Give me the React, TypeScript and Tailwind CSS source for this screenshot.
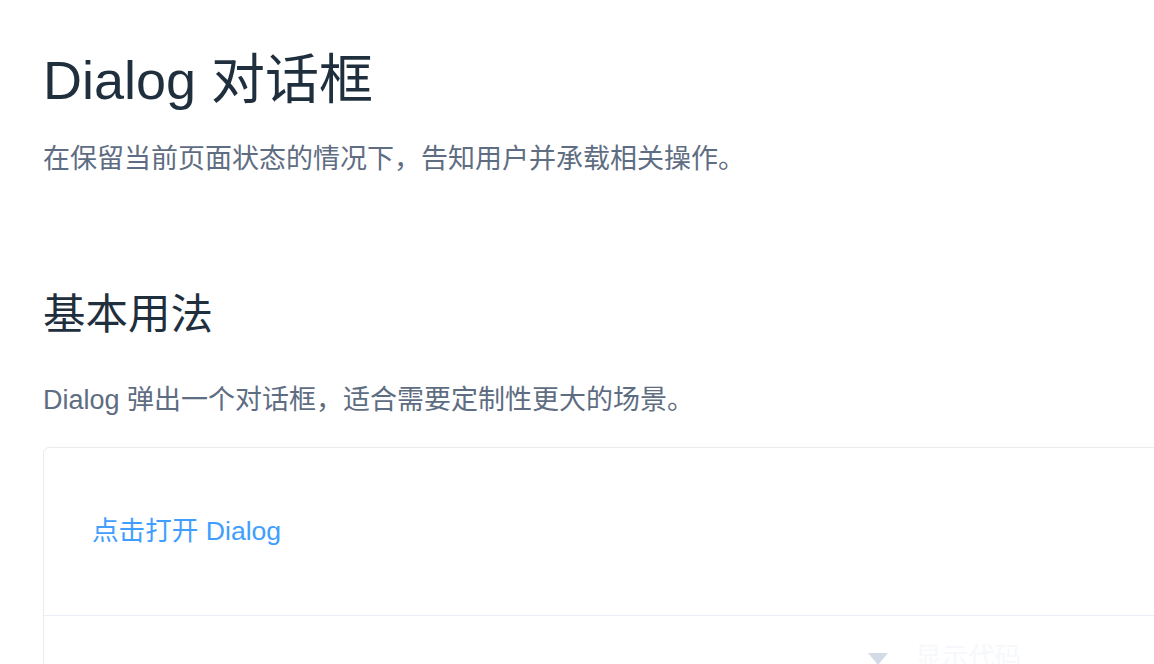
import React from "react";

const font = { fontFamily: '"Liberation Sans", "Noto Sans CJK SC", sans-serif' };

export default function App() {
  return (
    <div
      className="w-[1154px] h-[664px] overflow-hidden bg-white"
      style={font}
    >
      <div className="pl-[43px] pt-[53px]">
        <h2 className="text-[54px] leading-[54px] h-[54px] text-[#1f2f3d] font-normal whitespace-nowrap">
          Dialog 对话框
        </h2>
        <p className="mt-[39px] text-[27px] leading-[27px] h-[27px] text-[#5e6d82] whitespace-nowrap">
          在保留当前页面状态的情况下，告知用户并承载相关操作。
        </p>
        <h3 className="mt-[121px] text-[42.5px] leading-[42px] h-[42px] text-[#1f2f3d] font-normal whitespace-nowrap">
          基本用法
        </h3>
        <p className="mt-[51px] text-[27px] leading-[27px] h-[27px] text-[#5e6d82] whitespace-nowrap">
          Dialog 弹出一个对话框，适合需要定制性更大的场景。
        </p>
        <div className="mt-[33px] w-[1670px] border border-[#ebebeb] rounded-[6px]">
          <div className="pt-[45px] pb-[46px] pl-[48px]">
            <div className="h-[76px] pt-[25px]">
              <span className="text-[26.6px] leading-[26.6px] text-[#409eff] whitespace-nowrap">
                点击打开 Dialog
              </span>
            </div>
          </div>
          <div className="relative h-[84px] border-t border-[#eaeefb] flex justify-center">
            <svg
              width="20"
              height="12"
              viewBox="0 0 20 12"
              className="mt-[37px]"
            >
              <path d="M0 0 H20 L10 12 Z" fill="#d3dce6" />
            </svg>
            <span className="absolute left-[871px] top-[28px] text-[26.6px] leading-[26.6px] text-[#f6f8fc] whitespace-nowrap">
              显示代码
            </span>
          </div>
        </div>
      </div>
    </div>
  );
}
